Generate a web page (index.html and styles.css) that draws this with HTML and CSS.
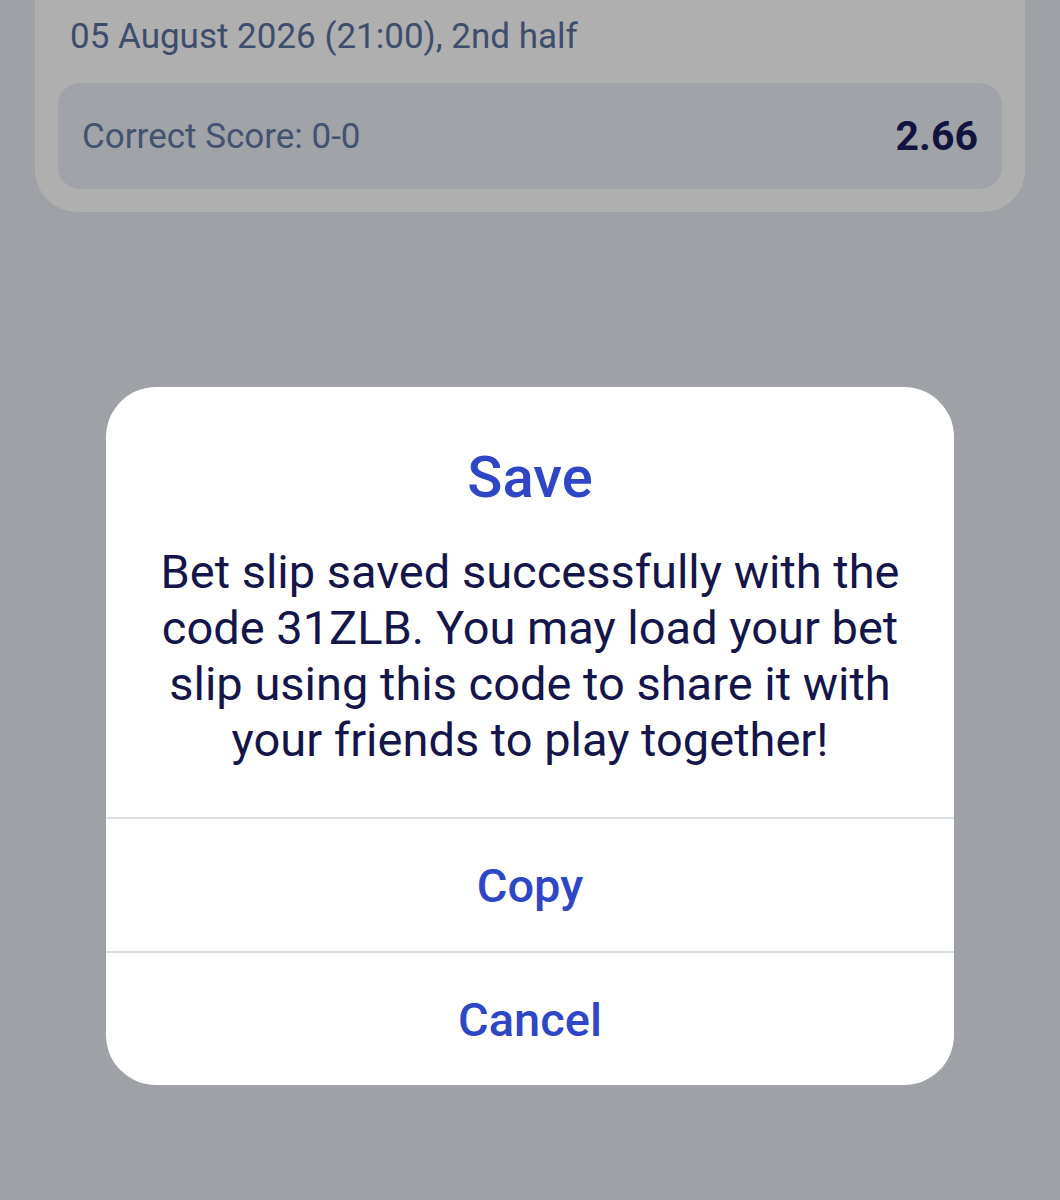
FILE: index.html
```html
<!DOCTYPE html>
<html>
<head>
<meta charset="utf-8">
<link rel="stylesheet" href="styles.css">
</head>
<body>
<div class="screen">
  <div class="bet-card">
    <div class="bet-date">05 August 2026 (21:00), 2nd half</div>
    <div class="bet-pick">
      <span class="pick-name">Correct Score: 0-0</span>
      <span class="pick-odds">2.66</span>
    </div>
  </div>
  <div class="dialog">
    <div class="dialog-body">
      <div class="dialog-title">Save</div>
      <div class="dialog-text">Bet slip saved successfully with the code 31ZLB. You may load your bet slip using this code to share it with your friends to play together!</div>
    </div>
    <div class="dialog-btn">Copy</div>
    <div class="dialog-btn">Cancel</div>
  </div>
</div>
</body>
</html>
```

FILE: styles.css
```css
html, body {
  margin: 0;
  padding: 0;
  background: #9ea1a6;
}
body {
  font-family: Roboto, "Noto Sans", sans-serif;
}
.screen {
  width: 1060px;
  height: 1200px;
  overflow: hidden;
  display: flex;
  flex-direction: column;
  align-items: center;
}
.bet-card {
  width: 990px;
  box-sizing: border-box;
  margin-top: -40px;
  background: #afafaf;
  border-radius: 0 0 42px 42px;
  padding: 57px 23px 23px 23px;
}
.bet-date {
  color: #3d4d6b;
  font-size: 35px;
  padding-left: 12px;
  line-height: 40px;
}
.bet-pick {
  margin-top: 26px;
  height: 106px;
  background: #a0a3a8;
  border-radius: 22px;
  display: flex;
  align-items: center;
  justify-content: space-between;
  padding: 0 24px;
}
.pick-name {
  color: #435270;
  font-size: 35px;
}
.pick-odds {
  color: #12143f;
  font-size: 41px;
  font-weight: 700;
}
.dialog {
  margin-top: 175px;
  width: 848px;
  background: #ffffff;
  border-radius: 50px;
  overflow: hidden;
}
.dialog-body {
  padding: 58px 40px 49px;
  text-align: center;
  border-bottom: 2px solid #d9dee7;
}
.dialog-title {
  color: #2f47c6;
  font-size: 58px;
  font-weight: 500;
  line-height: 64px;
}
.dialog-text {
  margin-top: 35px;
  color: #14154a;
  font-size: 47px;
  line-height: 56px;
}
.dialog-btn {
  height: 132px;
  display: flex;
  align-items: center;
  justify-content: center;
  color: #2f47c6;
  font-size: 47px;
  font-weight: 500;
}
.dialog-btn + .dialog-btn {
  border-top: 2px solid #d9dee7;
}
```
